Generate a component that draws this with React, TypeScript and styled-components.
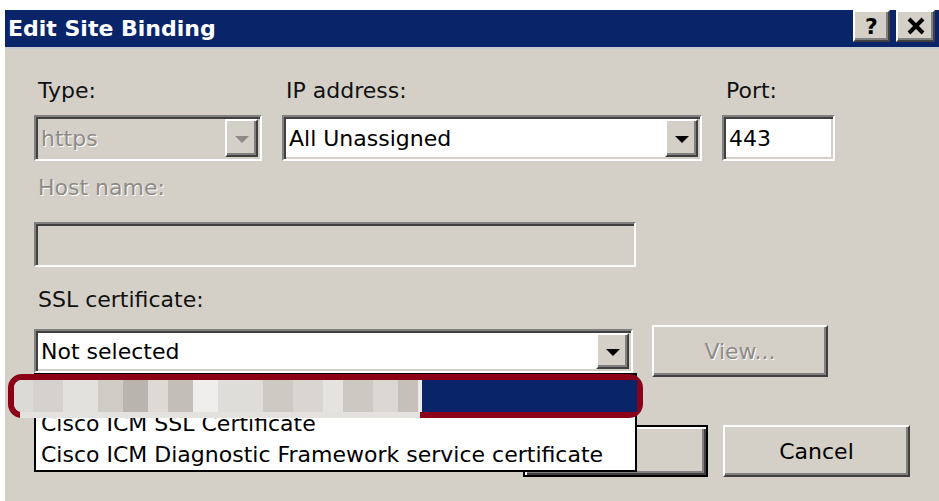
import React from 'react';
import styled, { createGlobalStyle, css } from 'styled-components';

// ----- global -----
const GlobalStyle = createGlobalStyle`
  html, body {
    margin: 0;
    padding: 0;
    background: #ffffff;
  }
  body {
    font-family: "DejaVu Sans", Verdana, sans-serif;
  }
`;

// classic 3d edges
const sunken = css`
  border-style: solid;
  border-width: 2px;
  border-color: #808080 #ffffff #ffffff #808080;
  box-shadow: inset 2px 2px 0 #404040, inset -2px -2px 0 #d4d0c8;
`;

const raised = css`
  border-style: solid;
  border-width: 2px;
  border-color: #ffffff #404040 #404040 #ffffff;
  box-shadow: inset -2px -2px 0 #808080;
`;

const disabledText = css`
  color: #8d8b87;
  text-shadow: 1px 1px 0 #ffffff;
`;

// ----- window frame -----
const Dialog = styled.div`
  margin: 10px 0 0 5px;
  width: 934px;
  height: 491px;
  background: #d4d0c8;
  display: flex;
  flex-direction: column;
  overflow: hidden;
`;

const TitleBar = styled.div`
  height: 37px;
  background: #0a246a;
  border-bottom: 2px solid #c9cbd3;
  display: flex;
  justify-content: space-between;
  padding: 0 4px 0 3px;
`;

const Title = styled.span`
  align-self: center;
  color: #ffffff;
  font-weight: bold;
  font-size: 22px;
  line-height: 26px;
`;

const CaptionButtons = styled.div`
  display: flex;
  gap: 6px;
`;

const CaptionButton = styled.div<{ $w: number }>`
  ${raised};
  box-sizing: border-box;
  width: ${({ $w }) => $w}px;
  height: 32px;
  background: #d4d0c8;
  display: flex;
  align-items: center;
  justify-content: center;
  font-weight: bold;
  font-size: 22px;
  color: #000;
`;

// ----- body -----
const Body = styled.div`
  position: relative;
  flex: 1;
  display: flex;
  flex-direction: column;
  padding: 29px 29px 0 29px;
`;

const TopRow = styled.div`
  display: grid;
  grid-template-columns: 228px 420px 113px;
  column-gap: 20px;
`;

const Group = styled.div`
  display: flex;
  flex-direction: column;
`;

const Label = styled.div<{ $disabled?: boolean; $gap?: number }>`
  font-size: 22px;
  line-height: 26px;
  padding-left: 4px;
  margin-bottom: ${({ $gap }) => $gap ?? 11}px;
  color: #111;
  ${({ $disabled }) => $disabled && disabledText};
`;

const Field = styled.div<{ $disabled?: boolean; $w?: number; $h?: number }>`
  ${sunken};
  box-sizing: border-box;
  width: ${({ $w }) => ($w ? `${$w}px` : 'auto')};
  height: ${({ $h }) => $h ?? 46}px;
  background: ${({ $disabled }) => ($disabled ? '#d4d0c8' : '#ffffff')};
  display: flex;
  align-items: stretch;
  padding: 2px;
`;

const Value = styled.div<{ $disabled?: boolean }>`
  flex: 1;
  display: flex;
  align-items: center;
  padding-left: 3px;
  font-size: 22px;
  color: #000;
  white-space: nowrap;
  ${({ $disabled }) => $disabled && disabledText};
`;

const DropButton = styled.div`
  ${raised};
  box-sizing: border-box;
  width: 33px;
  background: #d4d0c8;
  display: flex;
  align-items: center;
  justify-content: center;
`;

const Arrow = styled.div<{ $disabled?: boolean }>`
  width: 0;
  height: 0;
  border-left: 7px solid transparent;
  border-right: 7px solid transparent;
  border-top: 7px solid ${({ $disabled }) => ($disabled ? '#8d8b87' : '#000')};
  margin-top: 2px;
`;

const HostGroup = styled(Group)`
  margin-top: 14px;
`;

const SslGroup = styled(Group)`
  margin-top: 20px;
`;

const SslRow = styled.div`
  display: flex;
  align-items: center;
  gap: 19px;
`;

const ComboWrap = styled.div`
  position: relative;
  z-index: 2;
`;

const Button = styled.div<{ $w: number; $h: number; $disabled?: boolean; $default?: boolean }>`
  ${raised};
  box-sizing: border-box;
  width: ${({ $w }) => $w}px;
  height: ${({ $h }) => $h}px;
  background: #d4d0c8;
  display: flex;
  align-items: center;
  justify-content: center;
  font-size: 22px;
  color: #000;
  ${({ $disabled }) => $disabled && disabledText};
  ${({ $default }) =>
    $default &&
    css`
      border-color: #000;
      box-shadow: inset 2px 2px 0 #ffffff, inset -2px -2px 0 #404040, inset -4px -4px 0 #808080;
    `};
`;

const ButtonRow = styled.div`
  display: flex;
  justify-content: flex-end;
  gap: 15px;
  margin-top: 48px;
`;

// ----- open drop-down list -----
const List = styled.div`
  position: absolute;
  top: 100%;
  left: 0;
  width: 603px;
  box-sizing: border-box;
  border: 2px solid #000;
  background: #ffffff;
  padding-top: 2px;
`;

const Item = styled.div<{ $selected?: boolean }>`
  height: 31px;
  line-height: 31px;
  padding-left: 5px;
  font-size: 22px;
  color: ${({ $selected }) => ($selected ? '#fff' : '#000')};
  background: ${({ $selected }) => ($selected ? '#0a246a' : 'transparent')};
  white-space: nowrap;
`;

// red marker drawn over the blurred selected entry
const Marker = styled.div`
  position: absolute;
  left: -28px;
  top: -1px;
  width: 635px;
  height: 44px;
  box-sizing: border-box;
  border: 6px solid #8b0016;
  border-radius: 14px;
  display: flex;
  overflow: visible;

  &::after {
    content: '';
    position: absolute;
    left: 6px;
    top: 100%;
    width: 400px;
    height: 6px;
    background: #e4e2de;
  }
`;

const Mosaic = styled.div`
  display: flex;
  flex: 0 0 408px;
  border-radius: 8px 0 0 8px;
  overflow: hidden;
`;

const Cell = styled.div`
  height: 100%;
`;

const Highlight = styled.div`
  flex: 1;
  background: #0a246a;
`;

const mosaicCells: [number, string][] = [
  [19, '#dcdad6'],
  [30, '#d5d2cd'],
  [35, '#e3e1dd'],
  [25, '#cfccc6'],
  [25, '#b9b5ae'],
  [20, '#dddad5'],
  [25, '#c3bfb8'],
  [25, '#efeeec'],
  [45, '#dfddd9'],
  [30, '#cdcac4'],
  [30, '#d9d6d1'],
  [20, '#e5e3df'],
  [30, '#ccc8c2'],
  [25, '#dbd8d3'],
  [20, '#c5c1ba'],
  [4, '#ecebe9'],
];

const CloseGlyph = () => (
  <svg width="20" height="18" viewBox="0 0 20 18">
    <path d="M3 2 L17 16 M17 2 L3 16" stroke="#000" strokeWidth="4" />
  </svg>
);

const App: React.FC = () => {
  return (
    <>
      <GlobalStyle />
      <Dialog>
        <TitleBar>
          <Title>Edit Site Binding</Title>
          <CaptionButtons>
            <CaptionButton $w={37}>?</CaptionButton>
            <CaptionButton $w={39}>
              <CloseGlyph />
            </CaptionButton>
          </CaptionButtons>
        </TitleBar>

        <Body>
          <TopRow>
            <Group>
              <Label>Type:</Label>
              <Field $disabled>
                <Value $disabled>https</Value>
                <DropButton>
                  <Arrow $disabled />
                </DropButton>
              </Field>
            </Group>
            <Group>
              <Label>IP address:</Label>
              <Field>
                <Value>All Unassigned</Value>
                <DropButton>
                  <Arrow />
                </DropButton>
              </Field>
            </Group>
            <Group>
              <Label>Port:</Label>
              <Field>
                <Value>443</Value>
              </Field>
            </Group>
          </TopRow>

          <HostGroup>
            <Label $disabled $gap={21}>Host name:</Label>
            <Field $disabled $w={602} $h={45} />
          </HostGroup>

          <SslGroup>
            <Label $gap={12}>SSL certificate:</Label>
            <SslRow>
              <ComboWrap>
                <Field $w={599} $h={44}>
                  <Value>Not selected</Value>
                  <DropButton>
                    <Arrow />
                  </DropButton>
                </Field>
                <List>
                  <Item $selected>&nbsp;</Item>
                  <Item>Cisco ICM SSL Certificate</Item>
                  <Item>Cisco ICM Diagnostic Framework service certificate</Item>
                  <Marker>
                    <Mosaic>
                      {mosaicCells.map(([w, c], i) => (
                        <Cell key={i} style={{ width: w, background: c }} />
                      ))}
                    </Mosaic>
                    <Highlight />
                  </Marker>
                </List>
              </ComboWrap>
              <Button $w={176} $h={52} $disabled>
                View...
              </Button>
            </SslRow>
          </SslGroup>

          <ButtonRow>
            <Button $w={185} $h={52} $default>
              OK
            </Button>
            <Button $w={187} $h={52}>
              Cancel
            </Button>
          </ButtonRow>
        </Body>
      </Dialog>
    </>
  );
};

export default App;
